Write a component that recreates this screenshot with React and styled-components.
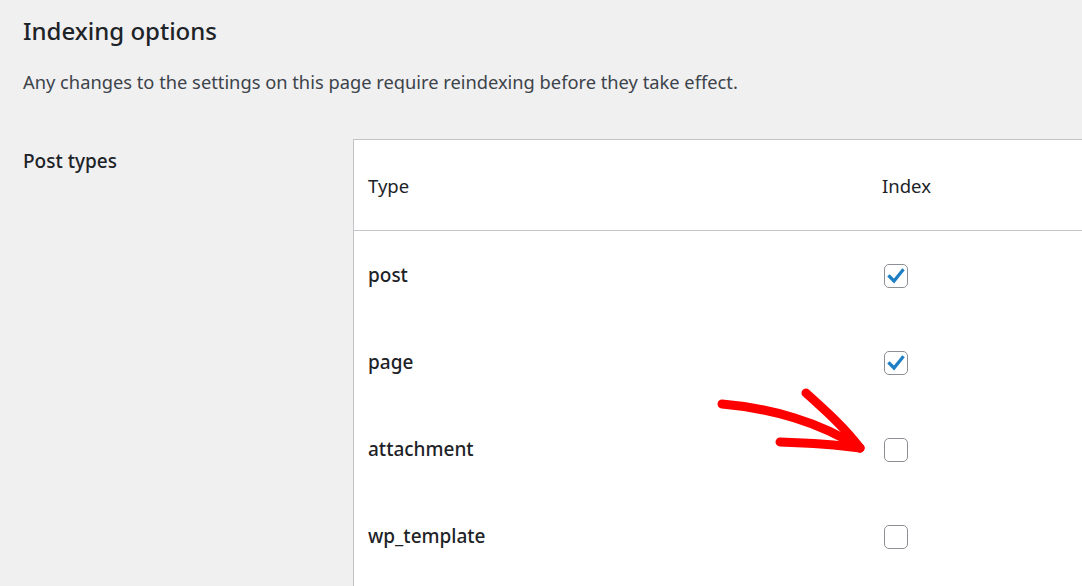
import React from 'react';
import styled, { createGlobalStyle } from 'styled-components';

const GlobalStyle = createGlobalStyle`
  html, body {
    margin: 0;
    padding: 0;
    background: #f0f0f1;
    overflow: hidden;
  }
  body {
    font-family: "Noto Sans", "Open Sans", sans-serif;
    color: #1d2327;
  }
`;

const Page = styled.div`
  position: relative;
  width: 1082px;
  height: 586px;
  padding-left: 23px;
  box-sizing: border-box;
  overflow: hidden;
`;

const Title = styled.h2`
  margin: 0;
  padding-top: 15px;
  font-size: 24px;
  line-height: 32px;
  font-weight: 500;
  color: #1d2327;
`;

const Description = styled.p`
  margin: 22px 0 0;
  font-size: 18.3px;
  line-height: 26px;
  color: #3c434a;
`;

const FormRow = styled.div`
  display: grid;
  grid-template-columns: 330px 1fr;
  margin-top: 44px;
`;

const Label = styled.div`
  padding-top: 9px;
  font-size: 19px;
  line-height: 26px;
  font-weight: 500;
`;

const Table = styled.table`
  width: 820px;
  table-layout: fixed;
  border-collapse: collapse;
  background: #fff;
  border: 1px solid #c3c4c7;
  font-size: 18.5px;
`;

const HeadCell = styled.th`
  height: 90px;
  padding: 0 14px;
  text-align: left;
  font-weight: 400;
  border-bottom: 1px solid #c3c4c7;
  width: ${p => p.$w || 'auto'};
`;

const Cell = styled.td`
  height: ${p => p.$h || '87px'};
  padding: 0 14px;
  font-size: 19px;
  font-weight: 500;
  vertical-align: middle;
`;

const Box = styled.span`
  display: flex;
  align-items: center;
  justify-content: center;
  width: 24px;
  height: 24px;
  margin-left: 2px;
  margin-top: 3px;
  box-sizing: border-box;
  border: 1.5px solid #8c8f94;
  border-radius: 5px;
  background: #fff;
`;

const Arrow = styled.svg`
  position: absolute;
  left: 0;
  top: 0;
  pointer-events: none;
`;

const Checkbox = ({ checked }) => (
  <Box>
    {checked && (
      <svg width="20" height="20" viewBox="0 0 20 20">
        <path d="M3.5 10.5 L8 15 L16.5 4.5" fill="none" stroke="#1e7fc4" strokeWidth="3.2" strokeLinecap="square" />
      </svg>
    )}
  </Box>
);

const types = [
  { name: 'post', checked: true },
  { name: 'page', checked: true },
  { name: 'attachment', checked: false },
  { name: 'wp_template', checked: false },
];

export default function App() {
  return (
    <Page>
      <GlobalStyle />
      <Title>Indexing options</Title>
      <Description>Any changes to the settings on this page require reindexing before they take effect.</Description>
      <FormRow>
        <Label>Post types</Label>
        <div>
          <Table>
            <thead>
              <tr>
                <HeadCell $w="486px">Type</HeadCell>
                <HeadCell>Index</HeadCell>
              </tr>
            </thead>
            <tbody>
              {types.map(t => (
                <tr key={t.name}>
                  <Cell>{t.name}</Cell>
                  <Cell><Checkbox checked={t.checked} /></Cell>
                </tr>
              ))}
              <tr>
                <Cell $h="40px" />
                <Cell $h="40px" />
              </tr>
            </tbody>
          </Table>
        </div>
      </FormRow>
      <Arrow width="1082" height="586" viewBox="0 0 1082 586">
        <g fill="none" stroke="#f00" strokeWidth="9" strokeLinecap="round" strokeLinejoin="round">
          <path d="M722 404 C770 408 820 422 860 448" />
          <path d="M806 393 C825 410 845 428 860 448" />
          <path d="M780 442 C810 443 838 445 860 448" />
        </g>
      </Arrow>
    </Page>
  );
}
